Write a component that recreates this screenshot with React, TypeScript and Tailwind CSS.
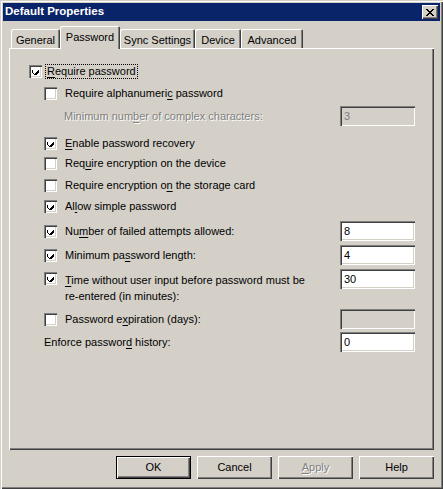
import React from "react";

const FONT = { fontFamily: '"Liberation Sans", Arial, sans-serif' };

function CheckBox({ checked }: { checked: boolean }) {
  return (
    <div className="w-[13px] h-[13px] shrink-0 bg-white shadow-[inset_1px_1px_#808080,inset_2px_2px_#404040,inset_-1px_-1px_#ffffff,inset_-2px_-2px_#d4d0c8] flex items-center justify-center">
      {checked && (
        <svg width="7" height="7" viewBox="0 0 7 7" shapeRendering="crispEdges">
          <path
            d="M0 2h1v3h1v1h1v-1h1v-1h1v-1h1v-1h1v3h-1v1h-1v1h-1v1h-1v-1h-1v-1h-1v-1h-1z"
            fill="#000"
          />
        </svg>
      )}
    </div>
  );
}

function U({ children }: { children: React.ReactNode }) {
  return <span className="underline underline-offset-[2px]">{children}</span>;
}

function Field({ value, disabled }: { value: string; disabled?: boolean }) {
  return (
    <div
      className={`w-[75px] h-[20px] shrink-0 flex items-center pl-[4px] text-[11px] shadow-[inset_1px_1px_#808080,inset_2px_2px_#404040,inset_-1px_-1px_#ffffff,inset_-2px_-2px_#d4d0c8] ${
        disabled ? "bg-[#d4d0c8] text-[#808080]" : "bg-white text-black"
      }`}
    >
      {value}
    </div>
  );
}

function Tab({
  label,
  width,
  selected,
}: {
  label: string;
  width: number;
  selected?: boolean;
}) {
  if (selected) {
    return (
      <div
        className="relative z-10 h-[23px] -mb-[1px] bg-[#d4d0c8] flex items-start justify-center pt-[3px] text-[11px] text-black shadow-[inset_1px_1px_#ffffff,inset_-1px_0_#404040,inset_-2px_0_#808080] rounded-t-[2px]"
        style={{ width }}
      >
        {label}
      </div>
    );
  }
  return (
    <div
      className="h-[19px] bg-[#d4d0c8] flex items-start justify-center pt-[3px] text-[11px] text-black shadow-[inset_1px_1px_#ffffff,inset_-1px_0_#404040,inset_-2px_0_#808080] rounded-t-[2px]"
      style={{ width }}
    >
      {label}
    </div>
  );
}

function Button({
  children,
  def,
  disabled,
}: {
  children: React.ReactNode;
  def?: boolean;
  disabled?: boolean;
}) {
  return (
    <div
      className={`w-[75px] h-[23px] flex items-center justify-center text-[11px] bg-[#d4d0c8] ${
        def
          ? "shadow-[inset_0_0_0_1px_#000000,inset_2px_2px_#ffffff,inset_-2px_-2px_#404040,inset_-3px_-3px_#808080]"
          : "shadow-[inset_1px_1px_#ffffff,inset_-1px_-1px_#404040,inset_-2px_-2px_#808080]"
      } ${disabled ? "text-[#808080] [text-shadow:1px_1px_0_#ffffff]" : "text-black"}`}
    >
      {children}
    </div>
  );
}

function Row({
  checked,
  children,
  h = 20,
  mt,
}: {
  checked: boolean;
  children: React.ReactNode;
  h?: number;
  mt: number;
}) {
  return (
    <div className="flex items-center pl-[35px]" style={{ height: h, marginTop: mt }}>
      <CheckBox checked={checked} />
      <span className="ml-[8px] text-[11px] text-black">{children}</span>
    </div>
  );
}

export default function App() {
  return (
    <div
      className="w-[443px] h-[489px] bg-[#d4d0c8] p-[3px] flex flex-col shadow-[inset_1px_1px_#d4d0c8,inset_2px_2px_#ffffff,inset_-1px_-1px_#404040,inset_-2px_-2px_#808080] select-none"
      style={FONT}
    >
      {/* Title bar */}
      <div className="h-[18px] bg-[#0a246a] flex items-center justify-between pl-[2px] pr-[2px]">
        <span className="text-white font-bold text-[11.5px] leading-none">Default Properties</span>
        <div className="w-[16px] h-[14px] bg-[#d4d0c8] flex items-center justify-center shadow-[inset_1px_1px_#ffffff,inset_-1px_-1px_#404040,inset_-2px_-2px_#808080]">
          <svg width="8" height="7" viewBox="0 0 8 7" shapeRendering="crispEdges">
            <path
              d="M0 0h2v1h1v1h2v-1h1v-1h2v1h-1v1h-1v1h-1v1h1v1h1v1h1v1h-2v-1h-1v-1h-2v1h-1v1h-2v-1h1v-1h1v-1h1v-1h-1v-1h-1v-1h-1z"
              fill="#000"
            />
          </svg>
        </div>
      </div>

      <div className="flex-1 flex flex-col px-[6px]">
        {/* Tabs */}
        <div className="mt-[6px] h-[21px] flex items-end pl-[2px]">
          <Tab label="General" width={49} />
          <Tab label="Password" width={60} selected />
          <Tab label="Sync Settings" width={75} />
          <Tab label="Device" width={46} />
          <Tab label="Advanced" width={62} />
        </div>

        {/* Panel */}
        <div className="h-[402px] bg-[#d4d0c8] shadow-[inset_1px_1px_#ffffff,inset_-1px_-1px_#404040,inset_-2px_-2px_#808080] flex flex-col">
          {/* Require password */}
          <div className="flex items-center pl-[20px] h-[20px] mt-[13px]">
            <CheckBox checked />
            <span className="ml-[4px] px-[1px] text-[11px] text-black outline outline-1 outline-dotted outline-[#000] leading-[13px]">
              <U>R</U>equire password
            </span>
          </div>

          <Row checked={false} mt={2}>
            Require alphanumeri<U>c</U> password
          </Row>

          {/* Min complex chars */}
          <div className="flex items-center justify-between pl-[55px] pr-[19px] h-[20px] mt-[3px]">
            <span className="text-[11px] text-[#808080] [text-shadow:1px_1px_0_#ffffff]">
              Minimum num<U>b</U>er of complex characters:
            </span>
            <Field value="3" disabled />
          </div>

          <Row checked mt={7}>
            <U>E</U>nable password recovery
          </Row>
          <Row checked={false} mt={0}>
            Req<U>u</U>ire encryption on the device
          </Row>
          <Row checked={false} mt={2}>
            Require encryption o<U>n</U> the storage card
          </Row>
          <Row checked mt={1}>
            Al<U>l</U>ow simple password
          </Row>

          <div className="flex items-center justify-between pl-[35px] pr-[19px] h-[20px] mt-[5px]">
            <div className="flex items-center">
              <CheckBox checked />
              <span className="ml-[8px] text-[11px] text-black">
                Nu<U>m</U>ber of failed attempts allowed:
              </span>
            </div>
            <Field value="8" />
          </div>

          <div className="flex items-center justify-between pl-[35px] pr-[19px] h-[20px] mt-[4px]">
            <div className="flex items-center">
              <CheckBox checked />
              <span className="ml-[8px] text-[11px] text-black">
                Minimum pa<U>s</U>sword length:
              </span>
            </div>
            <Field value="4" />
          </div>

          <div className="flex items-start justify-between pl-[35px] pr-[19px] mt-[4px]">
            <div className="flex items-start pt-[3px]">
              <CheckBox checked />
              <span className="ml-[8px] text-[11px] leading-[16px] text-black w-[240px]">
                <U>T</U>ime without user input before password must be re-entered (in minutes):
              </span>
            </div>
            <Field value="30" />
          </div>

          <div className="flex items-center justify-between pl-[35px] pr-[19px] h-[20px] mt-[5px]">
            <div className="flex items-center">
              <CheckBox checked={false} />
              <span className="ml-[8px] text-[11px] text-black">
                Password e<U>x</U>piration (days):
              </span>
            </div>
            <Field value="" disabled />
          </div>

          <div className="flex items-center justify-between pl-[35px] pr-[19px] h-[20px] mt-[3px]">
            <span className="text-[11px] text-black">
              Enforce passwor<U>d</U> history:
            </span>
            <Field value="0" />
          </div>
        </div>

        {/* Buttons */}
        <div className="mt-[6px] flex justify-end gap-[6px]">
          <Button def>OK</Button>
          <Button>Cancel</Button>
          <Button disabled>
            <U>A</U>pply
          </Button>
          <Button>Help</Button>
        </div>
      </div>
    </div>
  );
}
